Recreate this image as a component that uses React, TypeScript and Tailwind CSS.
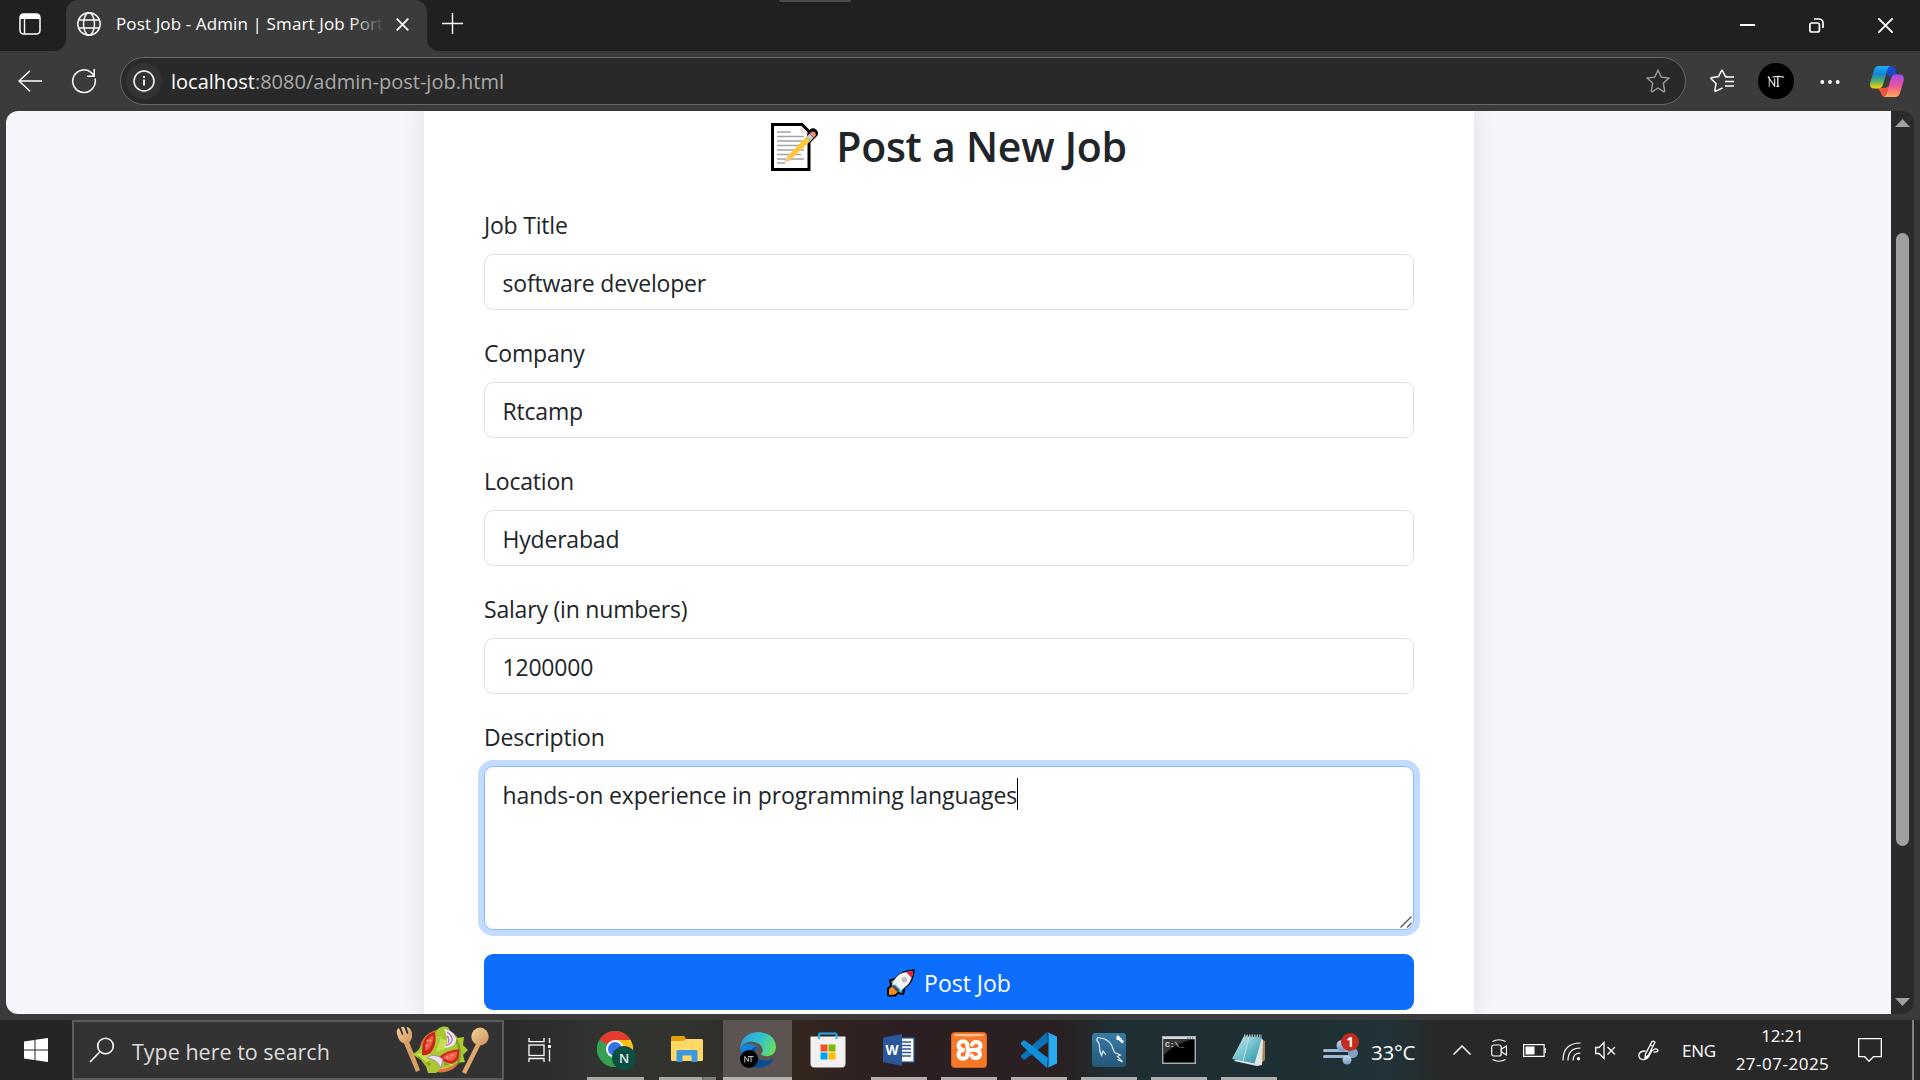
import React from 'react';

const fields = [
  { label: 'Job Title', value: 'software developer' },
  { label: 'Company', value: 'Rtcamp' },
  { label: 'Location', value: 'Hyderabad' },
  { label: 'Salary (in numbers)', value: '1200000' },
];

const StarPath = 'M12 1.2l3.3 6.9 7.5 1-5.5 5.2 1.4 7.5a.8.8 0 0 1-1.2.8L12 19l-5.500 3.600a.8.8 0 0 1-1.200-.8l1.400-7.500L1.200 9.100l7.500-1z';

function TabStrip() {
  return (
    <div className="flex h-[51px] w-full bg-[#202020]">
      <div className="flex w-[66px] items-end bg-[#3b3b3b]">
        <div className="flex h-full w-full items-center rounded-br-[12px] bg-[#202020] pl-[19px]">
          <svg width="22" height="22" viewBox="0 0 22 22" fill="none" className="mt-[-3px]">
            <rect x="1" y="1" width="20" height="20" rx="3.5" stroke="#fff" strokeWidth="1.5" />
            <path d="M1 6V4a3 3 0 0 1 3-3h14a3 3 0 0 1 3 3v2z" fill="#fff" />
            <path d="M5.500 6v15" stroke="#fff" strokeWidth="1.400" />
          </svg>
        </div>
      </div>
      <div className="flex h-full w-[361px] items-center rounded-t-[12px] bg-[#3b3b3b] pl-[11px]">
        <svg width="24" height="24" viewBox="0 0 24 24" fill="none" stroke="#fff" strokeWidth="1.400" className="mt-[-3px]">
          <circle cx="12" cy="12" r="11.200" />
          <ellipse cx="12" cy="12" rx="5.500" ry="11.200" />
          <path d="M2 8h20M2 16h20" />
        </svg>
        <div className="relative -mt-[3px] ml-[15px] w-[268px] overflow-hidden text-[17px] leading-6 tracking-[0.12px] whitespace-nowrap text-white">
          Post Job - Admin | Smart Job Portal
          <div className="absolute top-0 right-0 h-6 w-[34px] bg-linear-to-r from-transparent to-[#3b3b3b]" />
        </div>
        <svg width="13" height="13" viewBox="0 0 13 13" stroke="#fff" strokeWidth="1.700" className="-mt-[2px] ml-[12px]">
          <path d="M.7.7l11.600 11.600M12.300.7L.7 12.300" />
        </svg>
      </div>
      <div className="w-[14px] bg-[#3b3b3b]">
        <div className="h-full w-full rounded-bl-[12px] bg-[#202020]" />
      </div>
      <svg width="22" height="22" viewBox="0 0 22 22" stroke="#fff" strokeWidth="1.400" className="mt-[12px]">
        <path d="M11.500 1v21M1 11.500h21" />
      </svg>
      <div className="ml-[316px] h-[2px] w-[72px] rounded-b bg-[#4a4a4a]" />
      <div className="ml-auto flex pt-[18px] pr-[27px]">
        <svg width="15" height="15" viewBox="0 0 15 15" stroke="#fff" strokeWidth="2">
          <path d="M0 7h15" />
        </svg>
        <svg width="15" height="15" viewBox="0 0 15 15" fill="none" stroke="#fff" strokeWidth="1.700" className="ml-[54px]">
          <rect x=".9" y="5" width="9.500" height="9" rx="2" />
          <path d="M5 1h5a4 4 0 0 1 4 4v5" />
        </svg>
        <svg width="15" height="15" viewBox="0 0 15 15" stroke="#fff" strokeWidth="1.900" className="ml-[54px]">
          <path d="M.3.3l14.400 14.400M14.700.3L.3 14.700" />
        </svg>
      </div>
    </div>
  );
}

function Toolbar() {
  return (
    <div className="flex h-[60px] w-full items-center bg-[#3b3b3b]">
      <svg width="24" height="22" viewBox="0 0 24 22" fill="none" stroke="#fff" strokeWidth="1.500" className="ml-[18px]">
        <path d="M12 .8L1 11l11 10.200M1 11h23" />
      </svg>
      <svg width="26" height="26" viewBox="0 0 26 26" fill="none" stroke="#fff" strokeWidth="1.500" className="ml-[29px]">
        <path d="M24 10.500A11.300 11.300 0 1 1 20.500 4.700L23 7.400M23.200 1v7.300h-7.200" />
      </svg>
      <div className="ml-[23px] flex h-[48px] w-[1566px] items-center rounded-full border border-[#666] bg-[#292929] pl-[5px]">
        <div className="flex size-[36px] items-center justify-center rounded-full bg-[#333]">
          <svg width="22" height="22" viewBox="0 0 22 22" fill="none" stroke="#fff" strokeWidth="1.500">
            <circle cx="11" cy="11" r="10" />
            <path d="M11 9.500v6M11 6v2" strokeWidth="1.800" />
          </svg>
        </div>
        <div className="mt-px ml-[9px] text-[20px] leading-[30px] tracking-[0.01px] text-[#a9a9a9]">
          <span className="text-white">localhost</span>:8080/admin-post-job.html
        </div>
        <svg width="24" height="24" viewBox="0 0 24 24" fill="none" stroke="#9a9a9a" strokeWidth="1.400" className="mr-[15px] ml-auto">
          <path d={StarPath} />
        </svg>
      </div>
      <svg width="24" height="24" viewBox="0 0 24 24" fill="none" stroke="#fff" strokeWidth="1.500" className="ml-[24px]">
        <path d="M17 7.500L15.300 7.300 12.400 1.500Q12 .8 11.600 1.500L8.500 7.600 1.500 8.700Q.5 9 1.200 9.700L6 14.500 4.900 21.600Q5 22.700 6 22.200L12.500 18.800M15 8h9M15 12.500h9M15 17h9" />
      </svg>
      <div className="ml-[24px] flex size-[36px] items-center justify-center rounded-full bg-black">
        <Monogram size={18} />
      </div>
      <svg width="20" height="5" viewBox="0 0 20 5" fill="#fff" className="ml-[26px]">
        <circle cx="2.300" cy="3" r="1.900" />
        <circle cx="10" cy="3" r="1.900" />
        <circle cx="17.700" cy="3" r="1.900" />
      </svg>
      <svg width="34" height="31" viewBox="0 0 34 31" className="ml-[30px]">
        <defs>
          <linearGradient id="cpA" x1="0" y1="0" x2="0" y2="1">
            <stop offset="0" stopColor="#22aef2" />
            <stop offset=".35" stopColor="#1583d8" />
            <stop offset=".65" stopColor="#4fae70" />
            <stop offset="1" stopColor="#ffd400" />
          </linearGradient>
          <linearGradient id="cpB" x1="0" y1="0" x2="0" y2="1">
            <stop offset="0" stopColor="#9a4df0" />
            <stop offset=".5" stopColor="#f0529a" />
            <stop offset="1" stopColor="#ffab55" />
          </linearGradient>
        </defs>
        <path d="M15 0h6q3.500 0 4.500 4l1.200 4.500h-4q-3 0-4 3z" fill="#1a49cf" />
        <path d="M8 22h7l4-2-4 11q-3 0-4-4z" fill="#f2553a" />
        <path d="M9 0h12q-2.500 0-3.500 3.500L13 18.500Q12 22.500 8 22.500H4q-5 0-3.700-6L4 4Q5.300 0 9 0z" fill="url(#cpA)" />
        <path d="M25 8.500h4.500q5 0 4.200 6L30 27q-1.300 4-5 4H13q2.500 0 3.500-3.500L21 12.500q1-4 4-4z" fill="url(#cpB)" />
      </svg>
    </div>
  );
}

function Monogram({ size }: { size: number }) {
  return (
    <svg width={size} height={size * 0.7} viewBox="0 0 20 14" fill="none" stroke="#e6e6e6">
      <path d="M2.500 13V2" strokeWidth="1" />
      <path d="M1 1.500L8.500 12.500V4" strokeWidth="1.300" />
      <path d="M6 2.500Q12 .6 19 2.400" strokeWidth="1.200" />
      <path d="M12 2v10.500M10.500 12.800h3" strokeWidth="1.500" />
    </svg>
  );
}

function MemoIcon() {
  return (
    <svg width="48" height="48" viewBox="0 0 48 48" className="mt-[4px]">
      <path d="M1.500 1.500H31l7 7V46.500H1.500z" fill="#fff" stroke="#000" strokeWidth="3" />
      <path d="M29.500 3v7.500H36.500z" fill="#e3e3e3" />
      <path d="M6 9h14M6 13.500h27M6 18h27M6 22.500h26M6 27h27M6 31.500h24M6 36h27M6 40h8" stroke="#a3a3a3" strokeWidth="1.300" />
      <path d="M36 12l3-5.500q3-2.500 6 0t1.500 6L38.500 20.500l-3-3z" fill="#000" />
      <path d="M14.500 39l2.500-6.500L35 14l4.500 4L21 35.500z" fill="#ffc83d" />
      <path d="M13.300 39.800l2.500-6.500 4.200 4z" fill="#f0c6a3" />
      <path d="M35 14l3.500-3.300 4 4L39.500 18z" fill="#c9cdd2" />
      <path d="M38.500 10.700l2-1.900q2-1 3.500.5t.6 3.500l-1.800 2z" fill="#f08a80" />
    </svg>
  );
}

function RocketIcon() {
  return (
    <svg width="28" height="28" viewBox="0 0 28 28" className="mt-px">
      <path d="M.7 27V19l3-3-1.500-5 5-1.200Q14 1.500 27.200.8q-.5 12.700-9.400 18.400l-1.200 6.500-5-1.200-3 2.500z" fill="#000" stroke="#000" strokeLinejoin="round" />
      <path d="M4 12l4-1-2.500 5zM11 23l5-4.500-1 5.500z" fill="#1fb6e8" />
      <path d="M2 26v-6l3.500-3 5.500 5.500-3 3z" fill="#ff8a1e" />
      <path d="M5 16.500q1.500-6.500 6.500-10.500Q18 2.300 26 2q-.5 8-5 13.500-4 4.500-9.500 7z" fill="#f4f4f4" />
      <path d="M19 3q4-1 7-1-.1 3.300-1.200 7z" fill="#e81c3c" />
      <path d="M6.500 17l7-7 4.500 5-6 6.500z" fill="#5fd0f3" />
      <path d="M8.500 15.500l5.500-6 5 5-5.500 5.500z" fill="#fff" />
      <path d="M4.800 17.500l2-2 6 5.500-2 2.500z" fill="#4a4f55" />
      <circle cx="17.300" cy="10.800" r="2.700" fill="#bdbdbd" />
    </svg>
  );
}

function FormCard() {
  return (
    <div className="h-[903px] w-[1050px] bg-white px-[60px] pt-[9px] text-[23px] leading-[36px] tracking-[-0.2px] text-[#212529] shadow-[0_0_24px_rgba(0,0,0,0.1)]">
      <div className="mb-[36px] flex h-[50px] items-center justify-center">
        <MemoIcon />
        <h2 className="mt-[1px] ml-[17px] text-[41px] leading-[50px] font-semibold tracking-[-0.25px]">Post a New Job</h2>
      </div>
      {fields.map((f) => (
        <div key={f.label} className="mb-[24px]">
          <div className="mb-[12px] h-[36px] pt-px">{f.label}</div>
          <div className="h-[56px] rounded-[9px] border border-[#dee2e6] px-[17.5px] pt-[10px]">{f.value}</div>
        </div>
      ))}
      <div className="mb-[12px] h-[36px] pt-px">Description</div>
      <div className="flex h-[164px] rounded-[9px] border border-[#86b7fe] px-[17.5px] pt-[10px] ring-[6px] ring-[#c2dbfe]">
        <div className="tracking-[-0.09px]">hands-on experience in programming languages</div>
        <div className="mt-[1px] h-[32px] w-px bg-black" />
        <svg width="12" height="12" viewBox="0 0 12 12" stroke="#555" strokeWidth="1.400" className="mr-[-16px] mb-px ml-auto self-end">
          <path d="M.5 11.500l11-11M7 11.500l4.500-4.500" />
        </svg>
      </div>
      <div className="mt-[24px] flex h-[56px] items-center justify-center rounded-[9px] bg-[#0d6efd] text-white">
        <RocketIcon />
        <span className="mt-[2px] ml-[9px] tracking-[0px]">Post Job</span>
      </div>
    </div>
  );
}

function Page() {
  return (
    <div className="flex h-[909px] w-full bg-[#3b3b3b] pr-[6px] pb-[6px] pl-[6px]">
      <div className="flex h-[903px] w-full overflow-hidden rounded-[12px] bg-[#2b2b2b]">
        <div className="flex w-[1885px] overflow-hidden bg-[#f4f6fb] pl-[418px]">
          <FormCard />
        </div>
        <div className="flex w-[23px] flex-col items-center pt-[8px] pb-[8px]">
          <svg width="15" height="8" fill="#a0a0a0"><path d="M0 8L7.500 0 15 8z" /></svg>
          <div className="mt-[106px] h-[613px] w-[13px] rounded-full bg-[#a0a0a0]" />
          <svg width="15" height="8" fill="#a0a0a0" className="mt-auto"><path d="M0 0h15L7.500 8z" /></svg>
        </div>
      </div>
    </div>
  );
}

function SaladArt() {
  return (
    <svg width="94" height="48" viewBox="0 0 94 48">
      <defs>
        <linearGradient id="wood" x1="0" y1="0" x2="1" y2="1">
          <stop offset="0" stopColor="#f6cf9c" />
          <stop offset="1" stopColor="#cf9458" />
        </linearGradient>
      </defs>
      <path d="M7 15l5-2 12 31-4 2z" fill="#d9a066" />
      <path d="M1 8q-1-5 2-6l3 7 1.500-.5L5 1h3l3 7 1.500-.5L10.500 1q4 0 5.500 6 1 9-5.500 10.500Q3 18 1 8z" fill="url(#wood)" />
      <path d="M81 16l4 2-15 30-4-2z" fill="#e0a76c" />
      <ellipse cx="84" cy="10.500" rx="8.700" ry="9" fill="url(#wood)" />
      <circle cx="45" cy="25" r="21.500" fill="#d9773a" />
      <circle cx="45" cy="25" r="18" fill="#edb17c" />
      <path d="M41 4q4-5 11-3l4 7 5 4 7-1-1 8 5 5-5 5 2 7-8 1-7 4-9 1-5 5-8 0-2-7-5-6-9-6q7-3 9-8l7-4z" fill="#a9c832" />
      <path d="M60 14q6 8 2 24M48 38q8 0 14-6M22 30q6 3 12 9" stroke="#6f8c1c" strokeWidth="2.500" fill="none" opacity=".7" />
      <path d="M39 11l6 0-5 15 9-3 4-8M44 34l12 6 8-12M20 28q10-3 15 1l-4 8z" fill="#c5e04c" />
      <path d="M39 6q-14 3-13 23 7 1 10-4 5-7 3-19z" fill="#c9251b" />
      <path d="M37 9q-8 4-8 16 4-1 6-5 3-6 2-11z" fill="#ee5a45" />
      <path d="M48 3q12 2 12 12-2 7-12 7 4-4 3-10-1-5-3-9z" fill="#f1e5f1" />
      <path d="M51 6q6 4 5 9-2 4-6 4M51 10q3 3 1 7" stroke="#a67bb0" strokeWidth="1.300" fill="none" />
      <path d="M43 31q8-7 20-8 2 12-7 15-9-1-13-7z" fill="#cf2a1d" />
      <path d="M47 31q7-5 14-5 0 8-7 9-5-1-7-4z" fill="#f0634c" />
      <path d="M31 32q6-6 16 1l-2 9q-4-9-14-10z" fill="#ecdfee" stroke="#a67bb0" strokeWidth=".8" />
      <path d="M31 14l1 1M30 19l1 1M34 14l1 1M51 31l1 1M56 29l1 1" stroke="#f7cf8a" strokeWidth="1.500" />
    </svg>
  );
}

const ChromeIcon = () => (
  <svg width="40" height="40" viewBox="0 0 40 40" className="mt-[3px] ml-[3px]">
    <circle cx="18" cy="18" r="18" fill="#34a053" />
    <path d="M2.400 9A18 18 0 0 1 33.600 9L18 18 10 22z" fill="#e33b2e" />
    <path d="M33.600 9A18 18 0 0 1 18 36l8-14-8-13z" fill="#fbc116" />
    <path d="M18 36l8-13.500L18 18 2.400 9A18 18 0 0 0 18 36z" fill="#34a053" />
    <circle cx="18" cy="18" r="9" fill="#fff" />
    <circle cx="18" cy="18" r="7" fill="#3573e8" />
    <circle cx="27" cy="27" r="12" fill="#0b4f43" />
    <text x="27" y="31.700" textAnchor="middle" fontSize="13" fontWeight="600" fill="#e4efec" fontFamily="Open Sans">N</text>
  </svg>
);

const ExplorerIcon = () => (
  <svg width="32" height="27" viewBox="0 0 32 27">
    <path d="M0 1.500Q0 0 1.500 0H13q1 0 1.500 2v4H0z" fill="#e0a008" />
    <path d="M0 5h12l3-2h15.500Q32 3 32 4.500v19q0 1.500-1.500 1.500h-29Q0 25 0 23.500z" fill="#ffd865" />
    <path d="M5.500 26V15.500Q5.500 14 7 14h18q1.500 0 1.500 1.500V26h-6v-6.500h-9V26z" fill="#3f97de" />
  </svg>
);

const EdgeIcon = () => (
  <svg width="36" height="36" viewBox="0 0 36 36">
    <defs>
      <linearGradient id="eg1" x1="0" y1=".3" x2="1" y2=".6">
        <stop offset="0" stopColor="#2c9fe0" />
        <stop offset=".55" stopColor="#33c3cc" />
        <stop offset="1" stopColor="#68e05a" />
      </linearGradient>
      <linearGradient id="eg2" x1="0" y1="0" x2="1" y2="1">
        <stop offset="0" stopColor="#1b8be0" />
        <stop offset="1" stopColor="#0f4f9e" />
      </linearGradient>
    </defs>
    <path d="M0 16Q1 30 12 34.500 26 38 33 28.500q1-2-1-1.200-11 4-16-3-3-5 2-9Q8 8 0 16z" fill="url(#eg2)" />
    <path d="M13 34.800Q7 30 9 22q2-6 8-7.500-3 4-1 9 5 8 16.500 3.500 1.500-.4 0 2Q25 38 13 34.800z" fill="#0c4c94" />
    <path d="M0 16Q2 1 18 0q17 1 18 15-.5 9-9 9.300-6-.3-6-2.300 2.500-2 1.500-5Q21 10 11.500 9.500 4 10 0 16z" fill="url(#eg1)" />
    <circle cx="9" cy="27" r="9" fill="#000" />
    <path d="M4.800 30.500v-6l3.500 5v-4M8 24.500h5.500M11 24.500v5.500" stroke="#ddd" strokeWidth=".9" fill="none" />
  </svg>
);

const StoreIcon = () => (
  <svg width="36" height="36" viewBox="0 0 36 36">
    <path d="M9 8V2.500Q9 1.500 10 1.500h15.500q1 0 1 1V8" fill="none" stroke="#22a9ee" strokeWidth="2" />
    <path d="M.5 4.500h35v27q0 4-4 4h-27q-4 0-4-4z" fill="#f1f1f1" />
    <path d="M9 4.500V7M26.500 4.500V7" stroke="#22a9ee" strokeWidth="2" />
    <path d="M10.500 12.500h7v7h-7z" fill="#f25022" />
    <path d="M18.500 12.500h7v7h-7z" fill="#7fba00" />
    <path d="M10.500 20.500h7v7h-7z" fill="#00a4ef" />
    <path d="M18.500 20.500h7v7h-7z" fill="#ffb900" />
  </svg>
);

const WordIcon = () => (
  <svg width="32" height="32" viewBox="0 0 32 32">
    <rect x="17" y="4" width="14" height="24" fill="#fff" stroke="#2b579a" strokeWidth="1.300" />
    <path d="M19 8h9M19 11.500h9M19 15h9M19 18.500h9M19 22h9" stroke="#2b579a" strokeWidth="1.500" />
    <path d="M0 3.500L19 0v32L0 28z" fill="#2b579a" />
    <text x="9" y="20.800" textAnchor="middle" fontSize="13.500" fontWeight="700" fill="#fff" fontFamily="Open Sans">W</text>
  </svg>
);

const XamppIcon = () => (
  <svg width="36" height="36" viewBox="0 0 36 36">
    <rect x=".5" y=".5" width="35" height="35" rx="3" fill="#f6792a" stroke="#d8641c" />
    <path d="M3 3.500q0-1.500 1.500-1.500h27Q33 2 33 3.500 24 5 3 4z" fill="#fbbd94" />
    <path d="M16.500 17V13.500a4.500 4.300 0 0 0-9 0q0 3.500 4.500 4.500-4.500 1-4.500 4.500a4.500 4.300 0 0 0 9 0q0-4.500 4.500-4.500h3.500q5-.5 5-4.500a4.500 4.300 0 0 0-8.500-1M24.500 18q4.500.5 4.500 4.500a4.500 4.300 0 0 1-8.500 1" fill="none" stroke="#fff" strokeWidth="4" strokeLinecap="round" strokeLinejoin="round" />
  </svg>
);

const CodeIcon = () => (
  <svg width="36" height="36" viewBox="0 0 36 36">
    <path d="M26 0L0 23.500v2l2.500 2h1.500L27 10z" fill="#0a73b8" />
    <path d="M26 36L0 12.500v-2L2.500 8.500H4L27 26z" fill="#1390dc" />
    <path d="M26 0l10 4.500v27L26 36q1.500-1 1.500-3V3Q27.500 1 26 0z" fill="#2aa9f3" />
  </svg>
);

const MysqlIcon = () => (
  <svg width="34" height="34" viewBox="0 0 34 34">
    <defs>
      <linearGradient id="my" x1="0" y1="0" x2="0" y2="1">
        <stop offset="0" stopColor="#377ba8" />
        <stop offset="1" stopColor="#255674" />
      </linearGradient>
    </defs>
    <rect width="34" height="34" rx="3.500" fill="url(#my)" />
    <path d="M14 22l-3-4-1.500 4.500Q7.500 19 7.500 14 7.500 10 4.800 7 5 3.500 8.500 5 16 6 19.500 12l3 7.500 6 2.500-3 1.500 5 5.500-5-2.500" fill="none" stroke="#e2edf4" strokeWidth="1.200" />
    <path d="M25 3l2.500 2.500-3 .5M27 5.500l4 4" fill="none" stroke="#fff" strokeWidth="2.500" />
  </svg>
);

const TerminalIcon = () => (
  <svg width="34" height="28" viewBox="0 0 34 28">
    <rect x=".7" y=".7" width="32.600" height="26.600" fill="#000" stroke="#a9adb0" strokeWidth="1.500" />
    <path d="M1 2h32" stroke="#d5d8da" strokeWidth="2.500" />
    <path d="M25 2h6" stroke="#555" strokeDasharray="1.500 1" />
    <path d="M2 4h26Q12 8 2 19z" fill="#373737" />
    <text x="3" y="11" fontSize="8" fill="#ddd" fontFamily="Liberation Mono" fontWeight="700">C:\_</text>
  </svg>
);

const NotepadIcon = () => (
  <svg width="34" height="32" viewBox="0 0 34 32">
    <defs>
      <linearGradient id="np" x1="0" y1="0" x2="1" y2="1">
        <stop offset="0" stopColor="#d6f1f5" />
        <stop offset=".6" stopColor="#5db6c4" />
        <stop offset="1" stopColor="#2d8d9e" />
      </linearGradient>
    </defs>
    <path d="M29 5l4 2v19l-5 4z" fill="#ad8747" />
    <path d="M29 4l2 2-1 25-5 1-23-5z" fill="#dfe6e8" />
    <path d="M12 2l18 1.500-7.500 26L0 25z" fill="url(#np)" />
    <path d="M17 3l-6 24" stroke="#bde4ea" />
    <path d="M12 2h18" stroke="#a9b0b2" strokeWidth="3" strokeDasharray="1.500 1" />
  </svg>
);

function AppCell({ className, bar, children }: { className: string; bar?: string; children: React.ReactNode }) {
  return (
    <div className={`flex h-full flex-col items-center ${className}`}>
      <div className="flex h-[57px] items-center justify-center pb-0">
        <div className="mt-[2px] flex items-center justify-center">{children}</div>
      </div>
      {bar && <div className={`h-[3px] ${bar}`} />}
    </div>
  );
}

function Tray() {
  return (
    <div className="flex h-full flex-1 items-center text-white">
      <div className="flex w-[159px] items-center pl-[39px]">
        <svg width="37" height="32" viewBox="0 0 37 32" className="mt-[-2px]">
          <defs>
            <linearGradient id="wd" x1="0" y1="0" x2="0" y2="1">
              <stop offset="0" stopColor="#c9d9ec" />
              <stop offset="1" stopColor="#7396bd" />
            </linearGradient>
          </defs>
          <rect y="16" width="26" height="3" rx="1.500" fill="#9fb8d6" />
          <rect y="22" width="30" height="3" rx="1.500" fill="#9fb8d6" />
          <circle cx="19" cy="12.500" r="5.500" fill="url(#wd)" />
          <circle cx="30" cy="20" r="5" fill="#7f9fc4" />
          <circle cx="24" cy="27" r="4.500" fill="url(#wd)" />
          <circle cx="27" cy="9" r="9" fill="#c42b1c" />
          <text x="27" y="14" textAnchor="middle" fontSize="13.500" fontWeight="700" fill="#fff" fontFamily="Open Sans">1</text>
        </svg>
        <span className="mt-[3px] ml-[11px] text-[20.5px] leading-[30px] tracking-[-0.2px]">33°C</span>
      </div>
      <div className="flex w-[38px] justify-center">
        <svg width="18" height="10" viewBox="0 0 18 10" fill="none" stroke="#fff" strokeWidth="1.500"><path d="M.5 9.500L9 1l8.500 8.500" /></svg>
      </div>
      <div className="flex w-[36px] justify-center">
        <svg width="16" height="23" viewBox="0 0 16 23" fill="none" stroke="#fff" strokeWidth="1.200">
          <rect x=".7" y="6" width="9.500" height="11" rx="2" />
          <path d="M10.500 10l5-3v9l-5-3zM1.500 2.500q6.500-3.500 13 0M1.500 20.500q6.500 3.500 13 0" />
        </svg>
      </div>
      <div className="flex w-[35px] justify-center">
        <svg width="23" height="13" viewBox="0 0 23 13" fill="none" stroke="#fff" strokeWidth="1.200">
          <rect x=".6" y=".6" width="20.500" height="11.800" />
          <rect x="2.500" y="2.500" width="9" height="8" fill="#fff" stroke="none" />
          <path d="M22.300 4v5" />
        </svg>
      </div>
      <div className="flex w-[38px] justify-center pt-[2px]">
        <svg width="19" height="19" viewBox="0 0 19 19" fill="none" stroke="#fff" strokeWidth="1.200">
          <path d="M1 18.500Q1 1 18.500 1M6 18.500Q6 6 18.500 6M11 18.500Q11 11 18.500 11" />
          <circle cx="16.500" cy="16.800" r="1.700" fill="#fff" stroke="none" />
        </svg>
      </div>
      <div className="flex w-[31px] justify-center">
        <svg width="21" height="19" viewBox="0 0 21 19" fill="none" stroke="#fff" strokeWidth="1.300">
          <path d="M.7 6.500H4l5-5v16l-5-5H.7zM12.500 6l7.500 7.500M20 6l-7.500 7.500" />
        </svg>
      </div>
      <div className="flex w-[54px] justify-center">
        <svg width="21" height="21" viewBox="0 0 21 21" fill="none" stroke="#fff" strokeWidth="1.300">
          <path d="M7 18l.5-4L14 1.500q2-1 3 .8L10.500 15z M7.500 11Q1 11 .8 15.500 1.500 20 6 19.500q4-.5 6-5.500 1.500-4 5-5 3-.3 3 1.500-.5 2-4.500 1.500M12 5l3 1.500" />
        </svg>
      </div>
      <div className="w-[48px] pt-px text-center text-[17px] tracking-[-0.2px]">ENG</div>
      <div className="flex w-[119px] flex-col items-center text-[17px] leading-[28px]">
        <span className="tracking-[-0.2px]">12:21</span>
        <span className="tracking-[0.5px]">27-07-2025</span>
      </div>
      <div className="flex w-[56px] justify-center">
        <svg width="24" height="24" viewBox="0 0 24 24" fill="none" stroke="#fff" strokeWidth="1.300">
          <path d="M.7.7h22.600v18H15.500L11 23.200 6.700 18.700H.7z" />
        </svg>
      </div>
      <div className="ml-[14px] h-full w-[2px] bg-[#808080]" />
    </div>
  );
}

function Taskbar() {
  return (
    <div className="flex h-[60px] w-full bg-[linear-gradient(90deg,#242424_0,#292929_500px,#30332f_590px,#31332e_690px,#33261f_800px,#2b1f22_900px,#2a2022_1060px,#1f2e32_1110px,#1e2f33_1280px,#213338_1390px,#282828_1440px,#282828_1920px)]">
      <div className="flex w-[72px] items-center justify-center">
        <svg width="24" height="24" viewBox="0 0 24 24" fill="#fff">
          <path d="M0 3.500l10.500-1.500v9.500H0zM11.500 1.800L24 0v11.500H11.500zM0 12.500h10.500V22L0 20.500zM11.500 12.500H24V24l-12.500-1.800z" />
        </svg>
      </div>
      <div className="flex w-[432px] items-center border-2 border-[#5c5c5c] bg-[#333] pl-[15px]">
        <svg width="26" height="26" viewBox="0 0 26 26" fill="none" stroke="#fff" strokeWidth="1.600">
          <circle cx="16.500" cy="9" r="7.800" /><path d="M11 14.700L1 25" />
        </svg>
        <span className="mt-[3px] ml-[17px] text-[21.5px] leading-[30px] text-[#dcdcdc]">Type here to search</span>
        <div className="ml-auto pr-[12px]"><SaladArt /></div>
      </div>
      <div className="flex w-[76px] items-center justify-center pr-[5px]">
        <svg width="23" height="24" viewBox="0 0 23 24" fill="none" stroke="#fff" strokeWidth="1.300">
          <rect x="1" y="7" width="15" height="10.500" />
          <path d="M1 0v3.700h15V0M1 24v-3.500h15V24M21.500 0v5M21.500 11.500V23.500" />
          <rect x="20" y="7" width="3" height="3" fill="#fff" stroke="none" />
        </svg>
      </div>
      <AppCell className="w-[71px]" bar="w-[57px] bg-[#aba7a4]"><ChromeIcon /></AppCell>
      <AppCell className="w-[72px]" bar="w-[57px] bg-[linear-gradient(90deg,#aba7a4_43px,#747270_43px,#747270_45px,#7f7d7b_45px)]"><ExplorerIcon /></AppCell>
      <AppCell className="w-[69px] bg-[#5b5450]" bar="w-full bg-[#b8b3b0]"><EdgeIcon /></AppCell>
      <AppCell className="w-[72px]"><StoreIcon /></AppCell>
      <AppCell className="w-[70px]" bar="w-[56px] bg-[#b3adab]"><WordIcon /></AppCell>
      <AppCell className="w-[70px]" bar="w-[56px] bg-[#b3adab]"><XamppIcon /></AppCell>
      <AppCell className="w-[70px]" bar="w-[56px] bg-[#b3adab]"><CodeIcon /></AppCell>
      <AppCell className="w-[70px]" bar="w-[56px] bg-[#aeb0b0]"><MysqlIcon /></AppCell>
      <AppCell className="w-[70px]" bar="w-[56px] bg-[#aeb0b0]"><TerminalIcon /></AppCell>
      <AppCell className="w-[70px]" bar="w-[56px] bg-[#aeb0b0]"><NotepadIcon /></AppCell>
      <Tray />
    </div>
  );
}

export default function App() {
  return (
    <div className="flex h-[1080px] w-[1920px] flex-col overflow-hidden bg-[#3b3b3b] font-['Open_Sans','Noto_Sans',sans-serif] antialiased">
      <TabStrip />
      <Toolbar />
      <Page />
      <Taskbar />
    </div>
  );
}
